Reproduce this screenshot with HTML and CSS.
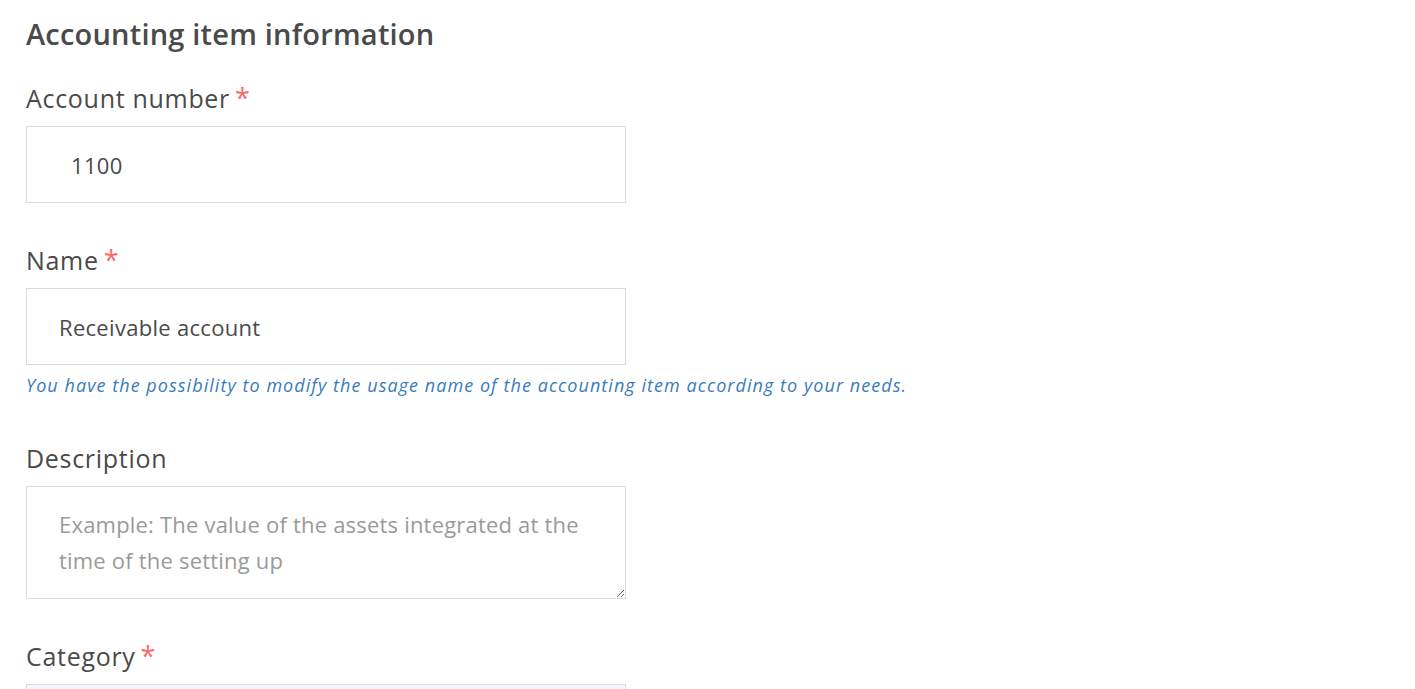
FILE: index.html
```html
<!DOCTYPE html>
<html lang="en">
<head>
<meta charset="utf-8">
<title>Accounting item information</title>
<link rel="stylesheet" href="styles.css">
</head>
<body>
<main class="page">
  <h1 class="title">Accounting item information</h1>

  <div class="field field-first">
    <label class="label">Account number<span class="req">*</span></label>
    <input class="input input-number" type="text" value="1100">
  </div>

  <div class="field field-next">
    <label class="label">Name<span class="req">*</span></label>
    <input class="input" type="text" value="Receivable account">
    <p class="help">You have the possibility to modify the usage name of the accounting item according to your needs.</p>
  </div>

  <div class="field field-after-help">
    <label class="label">Description</label>
    <textarea class="textarea" placeholder="Example: The value of the assets integrated at the time of the setting up"></textarea>
  </div>

  <div class="field field-next">
    <label class="label">Category<span class="req">*</span></label>
    <input class="input input-disabled" type="text" value="">
  </div>
</main>
</body>
</html>
```

FILE: styles.css
```css
html, body {
  margin: 0;
  padding: 0;
  background: #ffffff;
}

body {
  font-family: "Open Sans", "Lato", "Noto Sans", sans-serif;
  color: #4a4a4a;
}

.page {
  padding: 14px 26px 0 26px;
}

.title {
  margin: 0;
  font-size: 29px;
  line-height: 40px;
  font-weight: 600;
  letter-spacing: 0.2px;
  color: #4a4a4a;
}

.field {
  display: flex;
  flex-direction: column;
  align-items: flex-start;
}

.field-first {
  margin-top: 28px;
}

.field-next {
  margin-top: 41px;
}

.field-after-help {
  margin-top: 45px;
}

.label {
  display: block;
  height: 32px;
  font-size: 25px;
  line-height: 32px;
  font-weight: 400;
  letter-spacing: 0.7px;
  color: #4a4a4a;
  margin-bottom: 12px;
}

.req {
  color: #f56c6c;
  margin-left: 5px;
  font-size: 27px;
  line-height: 20px;
}

.input {
  box-sizing: border-box;
  width: 600px;
  height: 77px;
  border: 1px solid #d5dee8;
  border-radius: 0;
  padding: 0 32px;
  font-family: inherit;
  font-size: 22px;
  letter-spacing: 0.3px;
  color: #4a4a4a;
  background: #ffffff;
  outline: none;
}

.input-number {
  padding-left: 44px;
}

.input-disabled {
  background: #f5f7fa;
}

.help {
  margin: 8px 0 0 0;
  font-size: 18px;
  line-height: 24px;
  font-style: italic;
  letter-spacing: 1.05px;
  color: #3a7cbd;
}

.textarea {
  box-sizing: border-box;
  width: 600px;
  height: 113px;
  border: 1px solid #d5dee8;
  border-radius: 0;
  padding: 19px 32px 18px 32px;
  font-family: inherit;
  font-size: 22px;
  line-height: 36px;
  letter-spacing: 0.2px;
  color: #4a4a4a;
  resize: vertical;
  outline: none;
}

.textarea::placeholder {
  color: #9a9a9a;
}
```
